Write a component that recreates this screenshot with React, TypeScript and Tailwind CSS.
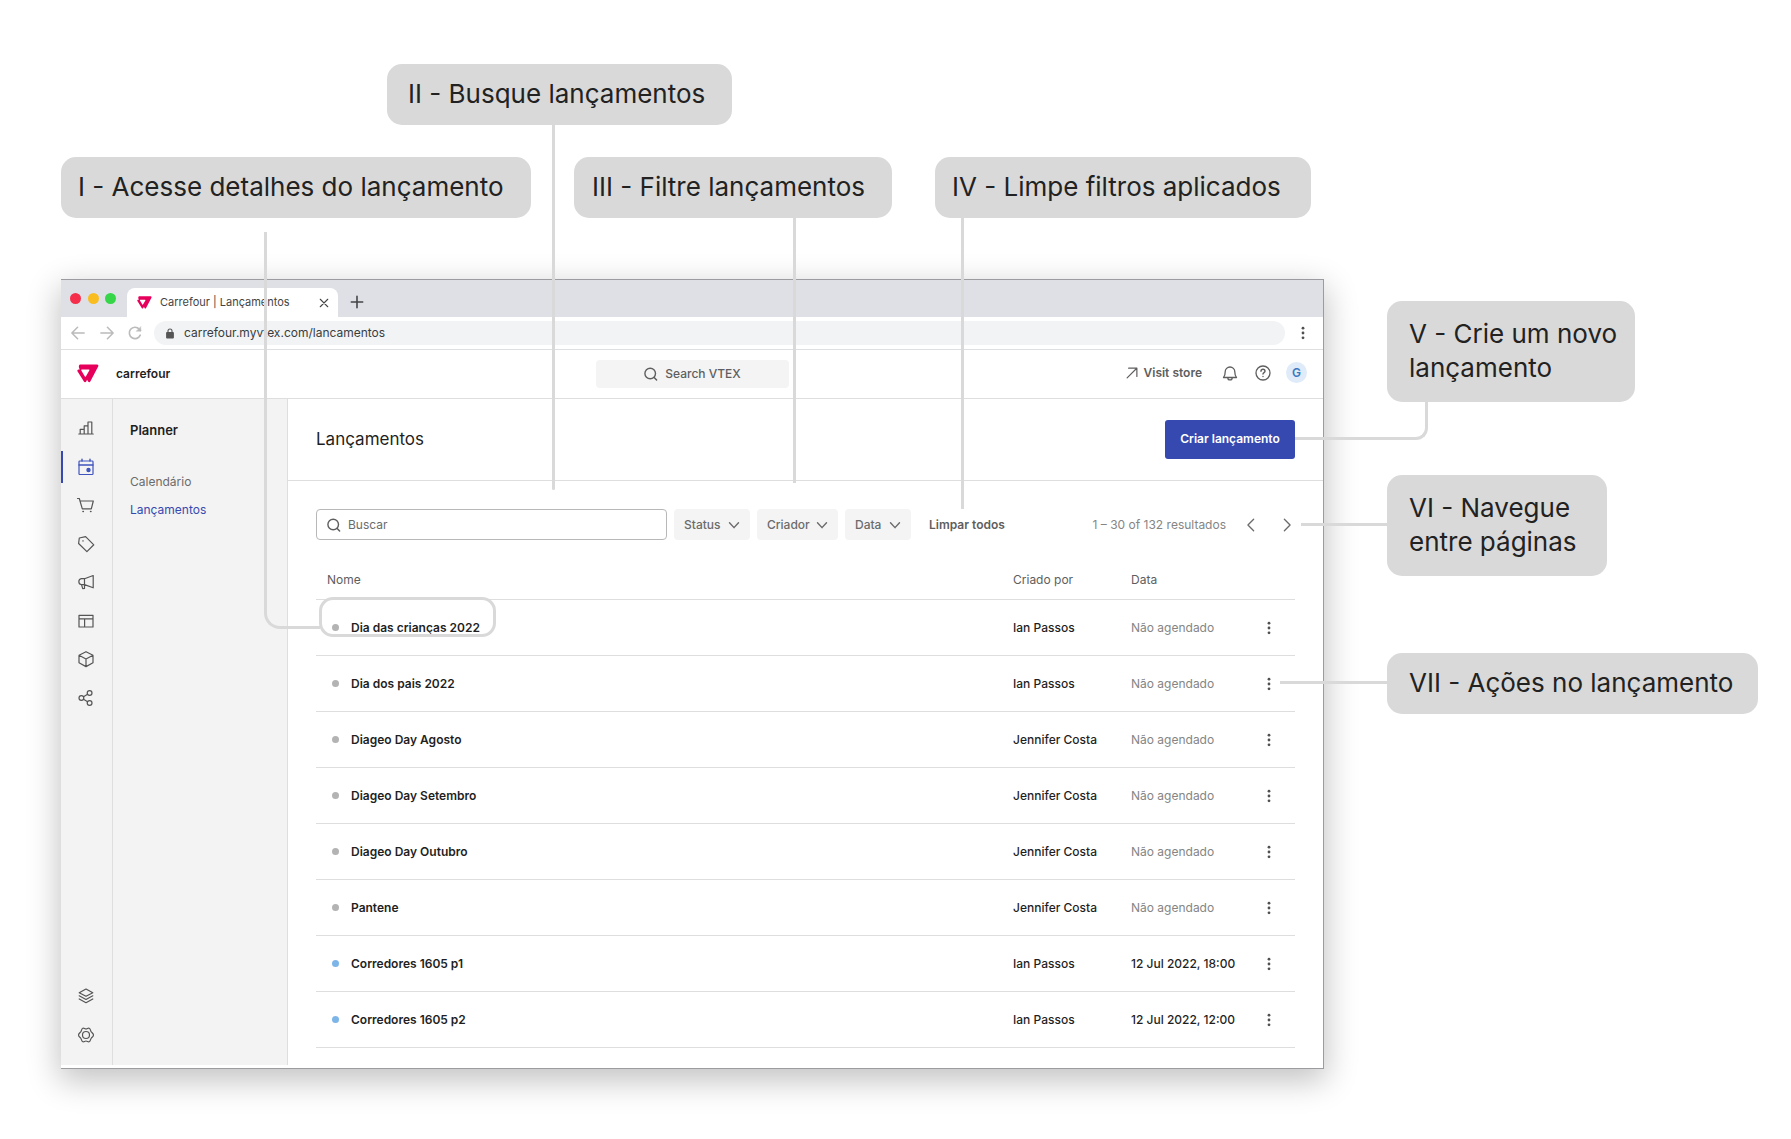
import type { ReactNode } from "react";

const items = [
  { name: "Dia das crianças 2022", by: "Ian Passos", date: "" },
  { name: "Dia dos pais 2022", by: "Ian Passos", date: "" },
  { name: "Diageo Day Agosto", by: "Jennifer Costa", date: "" },
  { name: "Diageo Day Setembro", by: "Jennifer Costa", date: "" },
  { name: "Diageo Day Outubro", by: "Jennifer Costa", date: "" },
  { name: "Pantene", by: "Jennifer Costa", date: "" },
  { name: "Corredores 1605 p1", by: "Ian Passos", date: "12 Jul 2022, 18:00" },
  { name: "Corredores 1605 p2", by: "Ian Passos", date: "12 Jul 2022, 12:00" },
];

function Icon({ children, className = "size-4" }: { children: ReactNode; className?: string }) {
  return (
    <svg
      viewBox="0 0 16 16"
      className={`shrink-0 overflow-visible ${className}`}
      fill="none"
      stroke="currentColor"
      strokeWidth="1.2"
      strokeLinecap="round"
      strokeLinejoin="round"
      aria-hidden="true"
    >
      {children}
    </svg>
  );
}

function VtexLogo({ className }: { className: string }) {
  return (
    <svg viewBox="0 0 22 19" className={className} aria-hidden="true">
      <path
        fill="#e6005c"
        fillRule="evenodd"
        d="M3.200.5h16.900c1.100 0 1.700 1.100 1.100 2.100l-7.900 15c-.5 1-1.700 1-2.200 0l-1-1.800-.9 1.800c-.5 1-1.800 1-2.300 0L.6 7.400C0 6.300.6 5.400 1.700 5.400h1L2 3.700C1.600 2 2 .5 3.200.5zM4.700 5.600c-.4 0-.6.400-.4.800l3.600 6.200c.2.400.7.400.9 0l3.500-6.200c.2-.4 0-.8-.4-.8z"
      />
    </svg>
  );
}

function Dots() {
  return (
    <svg viewBox="0 0 16 16" className="size-4 text-[#505050]" fill="currentColor" aria-hidden="true">
      <circle cx="8" cy="3.200" r="1.400" />
      <circle cx="8" cy="8" r="1.400" />
      <circle cx="8" cy="12.800" r="1.400" />
    </svg>
  );
}

function SearchIcon() {
  return (
    <Icon className="size-4 text-[#5e5e5e]">
      <circle cx="7.200" cy="7.500" r="5.300" strokeWidth="1.400" />
      <path d="M11.200 11.500L13.600 14" strokeWidth="1.500" />
    </Icon>
  );
}

const mainNav = [
  {
    label: "Dashboards",
    icon: <path d="M0.800 14H15.200M2.200 14V9.300h4V14M6.200 14V5.800h3.800V14M10 14V2h3.800v12" />,
  },
  {
    label: "Planner",
    active: true,
    icon: (
      <>
        <rect x="1" y="2" width="14" height="13.500" rx="0.800" />
        <path d="M1 6h14M4 0.300V2M12 0.300V2" strokeWidth="1.400" />
        <circle cx="10.500" cy="11" r="1.600" fill="currentColor" />
      </>
    ),
  },
  {
    label: "Pedidos",
    icon: (
      <>
        <path d="M-0.500 1.500H1.300l3 10.300h9L15.300 4H2.100" />
        <path d="M5 14.500h.3M12.600 14.500h.3" strokeWidth="1.600" />
      </>
    ),
  },
  {
    label: "Catálogo",
    icon: (
      <>
        <path d="M1.300 2l6.300-1.400 8.200 8.200-6.900 6.800L.6 7.500z" />
        <path d="M4.900 4.900h.2" strokeWidth="1.400" />
      </>
    ),
  },
  {
    label: "Promoções",
    icon: (
      <path d="M6.500 4.700L15.200 1.500v12.300L6.500 10.600H3.300a3 3 0 010-5.900H6.500v5.900M3.500 10.700l1.200 4 1.800-.3V10.600" />
    ),
  },
  {
    label: "Vitrine",
    icon: <path d="M1 2.300h14v11.700H1zM1 5.800h14M6.600 5.800v8.200" />,
  },
  {
    label: "Apps",
    icon: <path d="M8 .7l7 3.600v7.500L8 15.600l-7-3.800V4.300zM1 4.300L8 8l7-3.700M8 8v7.600" />,
  },
  {
    label: "Integrações",
    icon: (
      <>
        <circle cx="3.400" cy="8" r="2.400" />
        <circle cx="11.600" cy="3" r="2.400" />
        <circle cx="11.600" cy="13" r="2.400" />
        <path d="M5.500 6.800l4.100-2.500M5.500 9.200l4.100 2.500" />
      </>
    ),
  },
];

const footNav = [
  {
    label: "Camadas",
    icon: <path d="M8 1l6.800 3.700L8 8.300 1.200 4.700zM1.200 7.800L8 11.500l6.800-3.700M1.200 11L8 14.700 14.800 11" />,
  },
  {
    label: "Configurações",
    icon: (
      <>
        <circle cx="8" cy="8" r="3.500" />
        <path d="M4.800 1.200c1.300-.4 1.900.8 3.200.8s1.900-1.200 3.200-.8c1.300.4 1.300 2.900 2.100 3.700.6.700 2.200 1.600 2.200 3.100s-1.600 2.400-2.200 3.100c-.8.800-.8 3.300-2.100 3.700-1.300.4-1.900-.8-3.200-.8s-1.900 1.200-3.200.8c-1.300-.4-1.300-2.900-2.100-3.700C2.100 10.400.5 9.500.5 8s1.600-2.400 2.200-3.100c.8-.8.8-3.300 2.100-3.700z" />
      </>
    ),
  },
];

function RailButton({ label, active, children }: { label: string; active?: boolean; children: ReactNode }) {
  return (
    <button
      type="button"
      aria-label={label}
      className={`flex h-8 w-full items-center justify-center border-l-2 pr-1 ${
        active ? "border-[#3549b1] text-[#3f54bd]" : "border-transparent text-[#555]"
      }`}
    >
      <Icon>{children}</Icon>
    </button>
  );
}

function BrowserChrome() {
  return (
    <>
      <div className="flex h-[37px] items-end bg-[#dee0e6] pl-[9px]">
        <div className="flex h-[37px] items-center gap-1.5 pr-[11px] pb-px">
          <span className="size-[11px] rounded-full bg-[#f52f4b]" />
          <span className="ml-px size-[11px] rounded-full bg-[#f9bd1f]" />
          <span className="size-[11px] rounded-full bg-[#36d648]" />
        </div>
        <div className="flex h-[29px] w-[211px] items-center rounded-t-lg bg-white pl-[10px] pr-[9px] text-[11px] text-[#444]">
          <VtexLogo className="mr-2 h-[13px] w-[15px]" />
          <span className="flex-1">Carrefour | Lançamentos</span>
          <button type="button" aria-label="Fechar aba">
            <Icon className="size-[10px]">
              <path d="M2 2l12 12M14 2L2 14" strokeWidth="1.700" />
            </Icon>
          </button>
        </div>
        <button type="button" aria-label="Nova aba" className="mb-2 ml-3 text-[#444]">
          <Icon className="size-[14px]">
            <path d="M8 1.500v13M1.500 8h13" strokeWidth="1.800" />
          </Icon>
        </button>
      </div>
      <div className="flex h-[33px] items-center border-b border-[#dedfe1] pl-2 pr-3 text-[#bbb]">
        <button type="button" aria-label="Voltar" className="ml-0.5">
          <Icon className="size-[14px]">
            <path d="M15 8H1M7.500 1.500L1 8l6.500 6.500" strokeWidth="1.800" />
          </Icon>
        </button>
        <button type="button" aria-label="Avançar" className="ml-[15px]">
          <Icon className="size-[14px]">
            <path d="M1 8h14M8.500 1.500L15 8l-6.500 6.500" strokeWidth="1.800" />
          </Icon>
        </button>
        <button type="button" aria-label="Recarregar" className="ml-[14px]">
          <Icon className="size-[14px]">
            <path d="M14 10.500A6.500 6.500 0 1 1 12.800 3.500L14.300 5" strokeWidth="1.900" />
            <path d="M14.600 1v5h-5z" fill="currentColor" strokeWidth="0.500" />
          </Icon>
        </button>
        <div className="ml-3 mr-[10px] flex h-6 flex-1 items-center rounded-full bg-[#f1f3f5] pl-3">
          <svg viewBox="0 0 8 11" className="h-[11px] w-2 fill-[#555]" aria-hidden="true">
            <path d="M1 4h6a.9.9 0 01.9.9v4.700a.9.9 0 01-.9.9H1a.9.9 0 01-.9-.9V4.900A.9.900 0 011 4z" />
            <path d="M2 4.500V3a2 2 0 014 0v1.500" fill="none" stroke="#555" strokeWidth="1.100" />
          </svg>
          <input
            aria-label="Endereço"
            defaultValue="carrefour.myvtex.com/lancamentos"
            className="ml-[10px] min-w-0 flex-1 bg-transparent text-[12px] text-[#3a3d40] outline-none"
          />
        </div>
        <button type="button" aria-label="Menu do navegador">
          <Dots />
        </button>
      </div>
    </>
  );
}

function TopBar() {
  return (
    <header className="flex h-[49px] items-center border-b border-[#dedede] pl-4 pr-4 pb-px">
      <div className="flex flex-1 items-center">
        <VtexLogo className="h-[19px] w-[22px]" />
        <span className="ml-[17px] text-[12px] font-semibold text-[#1f1f1f]">carrefour</span>
      </div>
      <button
        type="button"
        className="flex h-7 w-[193px] items-center justify-center gap-1.5 rounded bg-[#f4f4f4] text-[12px] font-medium text-[#5e5e5e]"
      >
        <SearchIcon />
        Search VTEX
      </button>
      <div className="flex flex-1 items-center justify-end pb-0.5 text-[#5e5e5e]">
        <a href="#store" className="flex items-center gap-1.5 text-[12px] font-semibold">
          <Icon className="size-3">
            <path d="M1.500 14.500L14 2M3.500 1.500h11v11" strokeWidth="1.600" />
          </Icon>
          Visit store
        </a>
        <button type="button" aria-label="Notificações" className="ml-5">
          <Icon>
            <path
              d="M1.500 12.500h13c-1.500-1.500-1.700-2.500-1.700-5.700a4.800 4.800 0 00-9.600 0c0 3.200-.2 4.200-1.700 5.700zM5.800 12.700a2.200 2.200 0 004.400 0"
              strokeWidth="1.300"
            />
          </Icon>
        </button>
        <button type="button" aria-label="Ajuda" className="ml-[17px]">
          <Icon>
            <circle cx="8" cy="8" r="7" strokeWidth="1.300" />
            <path d="M6 6.300a2 2 0 114 0c0 1.300-2 1.400-2 2.700M8 11.500v.1" strokeWidth="1.400" />
          </Icon>
        </button>
        <button
          type="button"
          className="ml-[15px] size-[21px] rounded-full bg-[#dfebf8] text-[12px] font-semibold text-[#3b77c0]"
        >
          G
        </button>
      </div>
    </header>
  );
}

function FilterButton({ children, className }: { children: ReactNode; className: string }) {
  return (
    <button
      type="button"
      className={`ml-[7px] flex h-[31px] items-center justify-between rounded bg-[#f4f4f4] px-[10px] text-[12px] font-medium text-[#6b6b6b] ${className}`}
    >
      {children}
      <Icon className="size-3">
        <path d="M2 5l6 6.500L14 5" strokeWidth="1.900" />
      </Icon>
    </button>
  );
}

function LaunchTable() {
  return (
    <table className="mt-5 w-full table-fixed border-separate border-spacing-0 text-left text-[12px] [&_td]:border-b [&_td]:border-[#dedede] [&_th]:border-b [&_th]:border-[#dedede]">
      <thead>
        <tr className="h-10 text-[#5e5e5e]">
          <th className="pl-[11px] font-normal">Nome</th>
          <th className="w-[118px] font-normal">Criado por</th>
          <th className="w-[124px] font-normal">Data</th>
          <th className="w-[40px]" aria-label="Ações" />
        </tr>
      </thead>
      <tbody>
        {items.map((item, i) => (
          <tr key={item.name} className="h-14 text-[#1f1f1f]">
            <td>
              <a href="#detalhes" className="relative flex w-fit items-center pl-4 font-semibold">
                <span
                  className={`mr-3 size-[7px] rounded-full ${item.date ? "bg-[#7db5e9]" : "bg-[#b3b3b3]"}`}
                />
                {item.name}
                {i === 0 && (
                  <span className="absolute -right-4 -top-[22px] bottom-0 left-[3px] rounded-[14px] border-[3px] border-[#d9d9d9]" />
                )}
              </a>
            </td>
            <td className="font-medium">{item.by}</td>
            <td className={item.date ? "font-medium" : "text-[#858585]"}>{item.date || "Não agendado"}</td>
            <td>
              <button type="button" aria-label={`Ações de ${item.name}`} className="block pl-1.5">
                <Dots />
              </button>
            </td>
          </tr>
        ))}
      </tbody>
    </table>
  );
}

function Browser() {
  return (
    <div className="min-w-0 flex-1 border-y border-r border-[#9c9ca0] bg-white shadow-[0_10px_30px_2px_rgba(0,0,0,0.24)]">
      <BrowserChrome />
      <TopBar />
      <div className="mb-[3px] flex">
        <nav
          aria-label="Principal"
          className="flex w-[52px] shrink-0 flex-col justify-between border-r border-[#dedede] bg-[#f3f3f3] pb-[14px] pt-[13px]"
        >
          <div className="flex h-[302px] flex-col justify-between">
            {mainNav.map((n) => (
              <RailButton key={n.label} label={n.label} active={n.active}>
                {n.icon}
              </RailButton>
            ))}
          </div>
          <div className="flex flex-col gap-[7px]">
            {footNav.map((n) => (
              <RailButton key={n.label} label={n.label}>
                {n.icon}
              </RailButton>
            ))}
          </div>
        </nav>
        <aside className="w-[175px] shrink-0 border-r border-[#dedede] bg-[#f3f3f3] pl-[17px] pt-[21px] text-[12px]">
          <h2 className="text-[13px] font-semibold leading-5 text-[#1f1f1f]">Planner</h2>
          <ul className="mt-8 leading-5">
            <li className="mb-2">
              <a href="#calendario" className="text-[#6b6b6b]">
                Calendário
              </a>
            </li>
            <li>
              <a href="#lancamentos" className="text-[#3549b1]">
                Lançamentos
              </a>
            </li>
          </ul>
        </aside>
        <main className="min-w-0 flex-1">
          <div className="flex h-[82px] items-center justify-between border-b border-[#dedede] pl-7 pr-7">
            <h1 className="text-[17px] text-[#1f1f1f]">Lançamentos</h1>
            <button
              type="button"
              className="h-[39px] w-[130px] rounded-[3px] bg-[#3549b1] pb-0.5 text-[12px] font-semibold text-white"
            >
              Criar lançamento
            </button>
          </div>
          <div className="px-7 pb-[17px] pt-7">
            <div className="flex h-[31px] items-center">
              <label className="flex h-[31px] w-[351px] items-center gap-1.5 rounded border border-[#b8b8b8] pl-[9px]">
                <SearchIcon />
                <input
                  aria-label="Buscar"
                  placeholder="Buscar"
                  className="min-w-0 flex-1 bg-transparent text-[12px] outline-none placeholder:text-[#6b6b6b]"
                />
              </label>
              <FilterButton className="w-[76px]">Status</FilterButton>
              <FilterButton className="w-[81px]">Criador</FilterButton>
              <FilterButton className="w-[66px]">Data</FilterButton>
              <button type="button" className="ml-[18px] text-[12px] font-semibold text-[#5e5e5e]">
                Limpar todos
              </button>
              <span className="ml-auto text-[12px] text-[#858585]">1 – 30 of 132 resultados</span>
              <button type="button" aria-label="Página anterior" className="ml-[18px] text-[#6b6b6b]">
                <Icon className="size-[14px]">
                  <path d="M11 1.500L4.500 8l6.500 6.500" strokeWidth="1.500" />
                </Icon>
              </button>
              <button type="button" aria-label="Próxima página" className="ml-[22px] pr-px text-[#6b6b6b]">
                <Icon className="size-[14px]">
                  <path d="M5 1.500L11.500 8 5 14.500" strokeWidth="1.500" />
                </Icon>
              </button>
            </div>
            <LaunchTable />
          </div>
        </main>
      </div>
    </div>
  );
}

function Callout({ text, className, line }: { text: string; className: string; line: string }) {
  return (
    <div
      className={`relative z-10 flex shrink-0 items-center rounded-[15px] bg-[#d9d9d9] pb-0.5 text-[26px] leading-[34px] text-[#222] ${className}`}
    >
      {text}
      <span aria-hidden="true" className={`pointer-events-none absolute border-[#d9d9d9] ${line}`} />
    </div>
  );
}

export default function App() {
  return (
    <div className="min-h-screen bg-white pb-[69px] pl-[61px] pr-[33px] pt-16 font-[Inter,sans-serif]">
      <div className="pl-[326px]">
        <Callout
          text="II - Busque lançamentos"
          className="h-[61px] w-[345px] pl-[21px]"
          line="left-[165px] top-full h-[365px] rounded-b border-l-[3px]"
        />
      </div>
      <div className="mt-8 flex gap-[43px]">
        <Callout
          text="I - Acesse detalhes do lançamento"
          className="h-[61px] w-[470px] pl-[17px]"
          line="left-[203px] top-[75px] h-[397px] w-[56px] rounded-bl-2xl border-b-[3px] border-l-[3px]"
        />
        <Callout
          text="III - Filtre lançamentos"
          className="h-[61px] w-[318px] pl-[18px]"
          line="left-[219px] top-full h-[265px] border-l-[3px]"
        />
        <Callout
          text="IV - Limpe filtros aplicados"
          className="h-[61px] w-[376px] pl-[17px]"
          line="left-[26px] top-full h-[291px] border-l-[3px]"
        />
      </div>
      <div className="mt-[61px] flex gap-[63px]">
        <Browser />
        <div className="w-[371px] shrink-0 pt-[22px]">
          <Callout
            text="V - Crie um novo lançamento"
            className="h-[101px] w-[248px] pl-[22px]"
            line="right-[207px] top-full h-[38px] w-[133px] rounded-br-xl border-b-[3px] border-r-[3px]"
          />
          <Callout
            text="VI - Navegue entre páginas"
            className="mt-[73px] h-[101px] w-[220px] pl-[22px] pr-4"
            line="right-full top-[48px] w-[86px] border-t-[3px]"
          />
          <Callout
            text="VII - Ações no lançamento"
            className="mt-[77px] h-[61px] pl-[22px]"
            line="right-full top-[28px] w-[107px] border-t-[3px]"
          />
        </div>
      </div>
    </div>
  );
}
